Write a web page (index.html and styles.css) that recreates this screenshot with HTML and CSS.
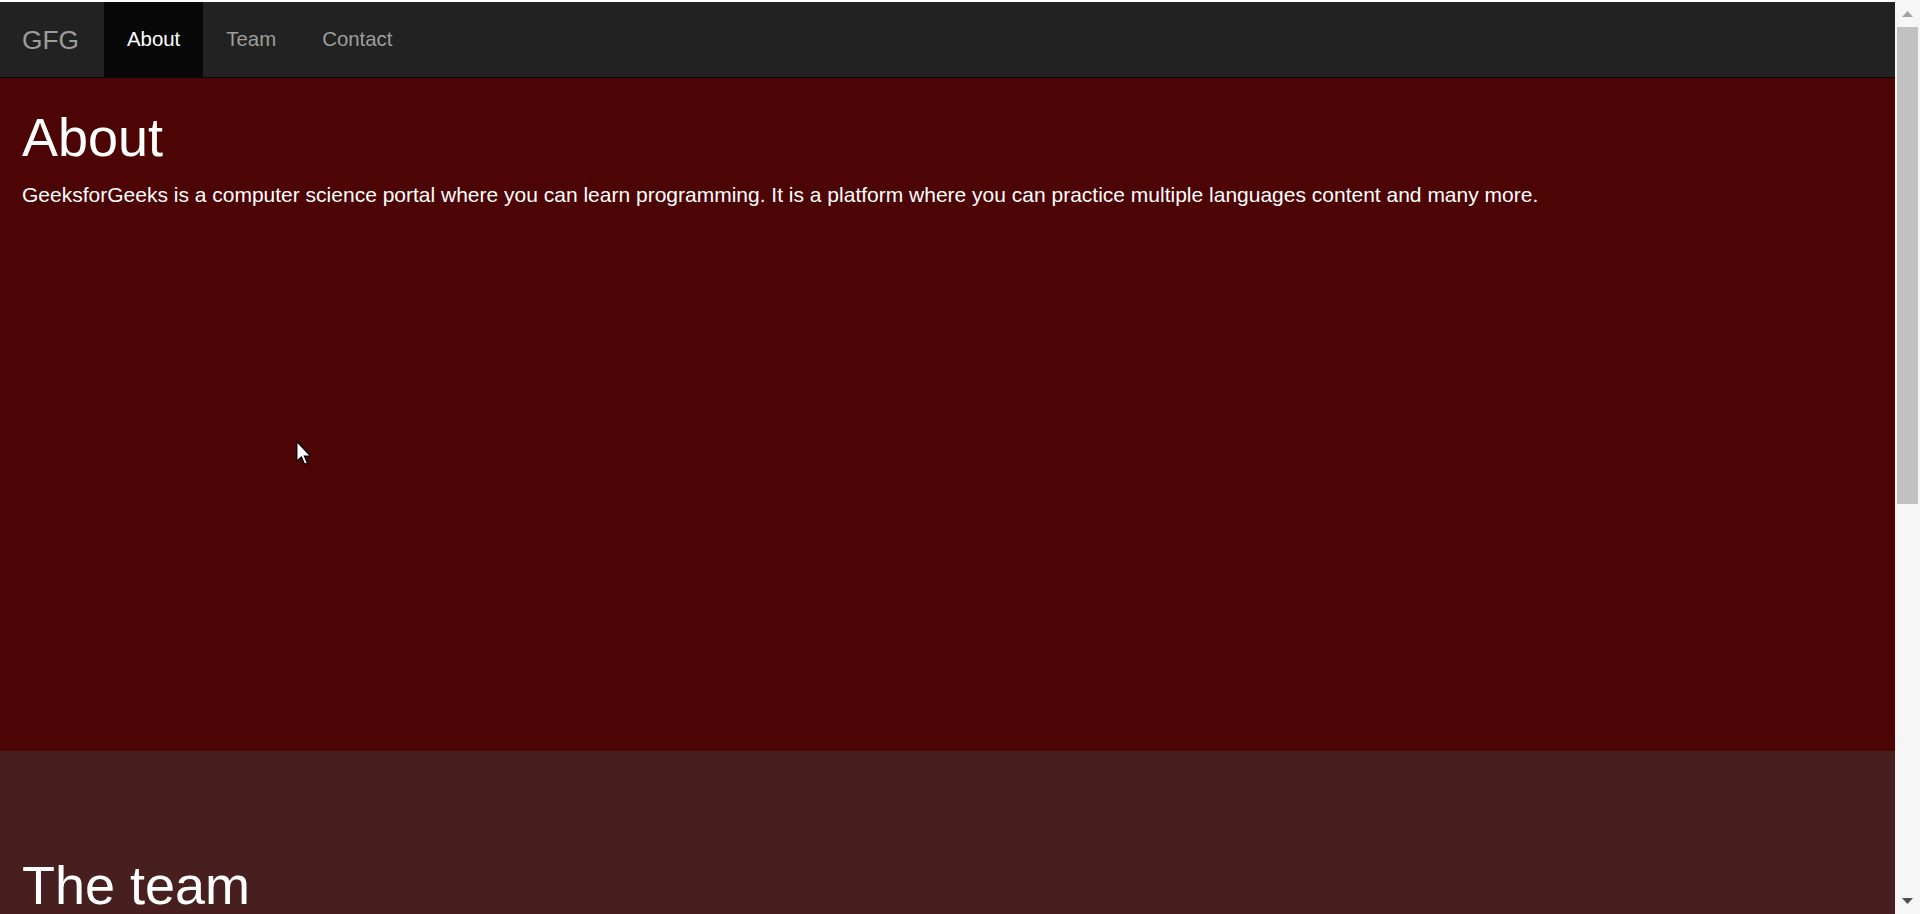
FILE: index.html
```html
<!DOCTYPE html>
<html lang="en">
<head>
<meta charset="utf-8">
<title>GFG</title>
<link rel="stylesheet" href="styles.css">
</head>
<body>
<div class="window">
  <div class="viewport">
    <nav class="navbar">
      <a class="brand" href="#">GFG</a>
      <ul class="nav">
        <li class="active"><a href="#about">About</a></li>
        <li><a href="#team">Team</a></li>
        <li><a href="#contact">Contact</a></li>
      </ul>
    </nav>
    <section class="section about" id="about">
      <h1>About</h1>
      <p>GeeksforGeeks is a computer science portal where you can learn programming. It is a platform where you can practice multiple languages content and many more.</p>
    </section>
    <section class="section team" id="team">
      <h1>The team</h1>
      <p>Meet the people behind GeeksforGeeks.</p>
    </section>
  </div>
  <div class="scrollbar">
    <div class="sb-btn">
      <svg width="11" height="6" viewBox="0 0 11 6"><polygon points="0,6 11,6 5.5,0" fill="#a3a3a3"/></svg>
    </div>
    <div class="sb-track"><div class="sb-thumb"></div></div>
    <div class="sb-btn">
      <svg width="11" height="6" viewBox="0 0 11 6"><polygon points="0,0 11,0 5.5,6" fill="#505050"/></svg>
    </div>
  </div>
  <svg class="cursor" width="16" height="25" viewBox="0 0 13 21">
    <path d="M0.5 0.5 L0.5 17 L4.3 13.4 L7 19.6 L9.4 18.6 L6.8 12.6 L12 12.6 Z" fill="#fff" stroke="#000" stroke-width="1"/>
  </svg>
</div>
</body>
</html>
```

FILE: styles.css
```css
html, body {
  margin: 0;
  padding: 0;
  background: #fff;
  font-family: "Liberation Sans", Arial, sans-serif;
}

.window {
  display: flex;
  height: 914px;
  overflow: hidden;
  position: relative;
}

.viewport {
  flex: 1;
  min-width: 0;
  padding-top: 2px;
  overflow: hidden;
}

.navbar {
  display: flex;
  height: 75px;
  background: #222;
  border-bottom: 1px solid #080808;
}

.brand {
  display: flex;
  align-items: center;
  padding: 0 25px 0 22px;
  font-size: 26.3px;
  line-height: 30px;
  color: #9d9d9d;
  text-decoration: none;
}

.nav {
  display: flex;
  list-style: none;
  margin: 0;
  padding: 0;
}

.nav li {
  display: flex;
}

.nav a {
  display: flex;
  align-items: center;
  padding: 0 23px;
  font-size: 20.4px;
  line-height: 29px;
  color: #9d9d9d;
  text-decoration: none;
}

.nav .active a {
  background: #080808;
  color: #fff;
}

.section {
  padding: 0 22px;
  color: #fff;
  box-sizing: border-box;
}

.section h1 {
  margin: 0 0 13px;
  font-size: 54px;
  line-height: 59.4px;
  font-weight: normal;
}

.section p {
  margin: 0;
  font-size: 21px;
  line-height: 29.4px;
}

.about {
  height: 673px;
  padding-top: 30px;
  background: #4c0404;
}

.team {
  height: 600px;
  padding-top: 105px;
  background: #471f1f;
}

.scrollbar {
  width: 25px;
  flex: none;
  display: flex;
  flex-direction: column;
  background: #f6f6f6;
}

.sb-btn {
  height: 27px;
  display: flex;
  align-items: center;
  justify-content: center;
}

.sb-track {
  flex: 1;
  padding: 0 2px;
}

.sb-thumb {
  height: 477px;
  background: #c1c1c1;
}

.cursor {
  position: absolute;
  left: 296px;
  top: 441px;
}
```
